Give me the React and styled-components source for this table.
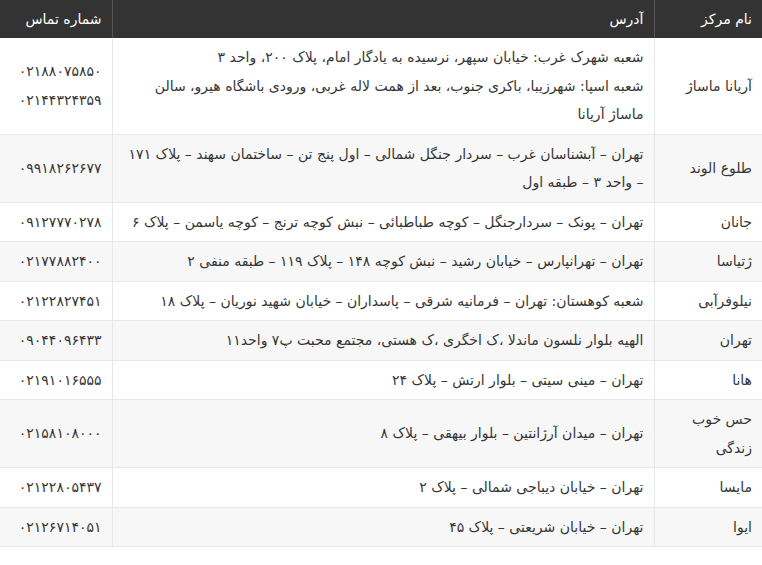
import React from "react"
import styled, { createGlobalStyle } from "styled-components"

const GlobalStyle = createGlobalStyle`
    body {
        margin: 0;
        background: #fff;
        font-family: "DejaVu Sans", "Noto Sans", sans-serif;
    }
`

const Table = styled.table`
    width: 762px;
    border-collapse: collapse;
    table-layout: fixed;
    direction: rtl;
    font-size: 14px;
    color: #363636;
`

const Head = styled.th`
    box-sizing: border-box;
    background: #333333;
    color: #ffffff;
    font-weight: normal;
    text-align: right;
    padding: 5px 10px;
    line-height: 28px;
    width: ${(p) => p.$w}px;
    border-left: 1px solid #555;
    &:last-child {
        border-left: none;
    }
`

const Row = styled.tr`
    background: ${(p) => (p.$odd ? "#f7f7f7" : "#ffffff")};
    border-bottom: 1px solid #e8e8e8;
`

const Cell = styled.td`
    box-sizing: border-box;
    text-align: right;
    vertical-align: middle;
    padding: 5px 10px;
    line-height: 28.5px;
    border-left: 1px solid #e8e8e8;
    &:last-child {
        border-left: none;
    }
`

const Line = styled.div``

const rows = [
    {
        name: "آریانا ماساژ",
        address: [
            "شعبه شهرک غرب: خیابان سپهر، نرسیده به یادگار امام، پلاک ۲۰۰، واحد ۳",
            "شعبه اسپا: شهرزیبا، باکری جنوب، بعد از همت لاله غربی، ورودی باشگاه هیرو، سالن ماساژ آریانا",
        ],
        phones: ["۰۲۱۸۸۰۷۵۸۵۰", "۰۲۱۴۴۳۲۴۳۵۹"],
    },
    {
        name: "طلوع الوند",
        address: ["تهران – آبشناسان غرب – سردار جنگل شمالی – اول پنج تن – ساختمان سهند – پلاک ۱۷۱ – واحد ۳ – طبقه اول"],
        phones: ["۰۹۹۱۸۲۶۲۶۷۷"],
    },
    {
        name: "جانان",
        address: ["تهران – پونک – سردارجنگل – کوچه طباطبائی – نبش کوچه ترنج – کوچه یاسمن – پلاک ۶"],
        phones: ["۰۹۱۲۷۷۷۰۲۷۸"],
    },
    {
        name: "ژتیاسا",
        address: ["تهران – تهرانپارس – خیابان رشید – نبش کوچه ۱۴۸ – پلاک ۱۱۹ – طبقه منفی ۲"],
        phones: ["۰۲۱۷۷۸۸۲۴۰۰"],
    },
    {
        name: "نیلوفرآبی",
        address: ["شعبه کوهستان: تهران – فرمانیه شرقی – پاسداران – خیابان شهید نوریان – پلاک ۱۸"],
        phones: ["۰۲۱۲۲۸۲۷۴۵۱"],
    },
    {
        name: "تهران",
        address: ["الهیه بلوار نلسون ماندلا ،ک اخگری ،ک هستی، مجتمع محبت پ۷ واحد۱۱"],
        phones: ["۰۹۰۴۴۰۹۶۴۳۳"],
    },
    {
        name: "هانا",
        address: ["تهران – مینی سیتی – بلوار ارتش – پلاک ۲۴"],
        phones: ["۰۲۱۹۱۰۱۶۵۵۵"],
    },
    {
        name: "حس خوب زندگی",
        address: ["تهران – میدان آرژانتین – بلوار بیهقی – پلاک ۸"],
        phones: ["۰۲۱۵۸۱۰۸۰۰۰"],
    },
    {
        name: "مایسا",
        address: ["تهران – خیابان دیباجی شمالی – پلاک ۲"],
        phones: ["۰۲۱۲۲۸۰۵۴۳۷"],
    },
    {
        name: "ایوا",
        address: ["تهران – خیابان شریعتی – پلاک ۴۵"],
        phones: ["۰۲۱۲۶۷۱۴۰۵۱"],
    },
]

export default function App() {
    return (
        <>
            <GlobalStyle />
            <Table>
                <thead>
                    <tr>
                        <Head $w={108}>نام مرکز</Head>
                        <Head $w={542}>آدرس</Head>
                        <Head $w={112}>شماره تماس</Head>
                    </tr>
                </thead>
                <tbody>
                    {rows.map((r, i) => (
                        <Row key={i} $odd={i % 2 === 1}>
                            <Cell>{r.name}</Cell>
                            <Cell>
                                {r.address.map((a, j) => (
                                    <Line key={j}>{a}</Line>
                                ))}
                            </Cell>
                            <Cell>
                                {r.phones.map((p, j) => (
                                    <Line key={j}>{p}</Line>
                                ))}
                            </Cell>
                        </Row>
                    ))}
                </tbody>
            </Table>
        </>
    )
}
